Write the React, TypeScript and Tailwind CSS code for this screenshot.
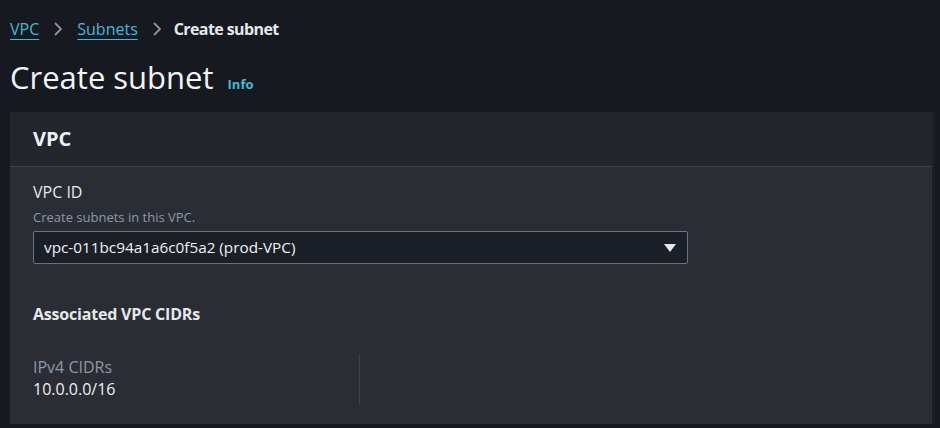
import React from "react";

export default function App() {
  return (
    <div
      className="w-[940px] h-[428px] bg-[#16191f] overflow-hidden"
      style={{ fontFamily: '"Open Sans", "Noto Sans", Arial, sans-serif' }}
    >
      <div className="pl-[10px] pt-[16px] flex items-center h-[24px] text-[16px] mt-[9px]">
        <span className="text-[#44b9d6] underline underline-offset-[4px] decoration-1">VPC</span>
        <svg width="12" height="16" viewBox="0 0 12 16" className="mx-[13px]">
          <path d="M3 2 L9 8 L3 14" fill="none" stroke="#8d9399" strokeWidth="1.8" />
        </svg>
        <span className="text-[#44b9d6] underline underline-offset-[4px] decoration-1">Subnets</span>
        <svg width="12" height="16" viewBox="0 0 12 16" className="mx-[13px] mr-[11px]">
          <path d="M3 2 L9 8 L3 14" fill="none" stroke="#8d9399" strokeWidth="1.8" />
        </svg>
        <span className="text-[#e6e8ea] font-bold tracking-[-0.6px]">Create subnet</span>
      </div>
      <div className="pl-[10px] mt-[22px] flex items-baseline h-[44px]">
        <span className="text-[31px] text-[#f2f3f3] leading-[44px]">Create subnet</span>
        <span className="ml-[14px] text-[13px] font-bold text-[#44b9d6]">Info</span>
      </div>
      <div className="ml-[10px] mt-[13px] w-[925px] h-[312px] bg-[#2a2d33] border-r-[3px] border-[#1e2025] flex flex-col">
        <div className="h-[55px] bg-[#23262d] border-b border-[#3c4048] flex items-center pl-[23px]">
          <span className="text-[20px] font-bold text-[#eef0f1]">VPC</span>
        </div>
        <div className="pl-[23px] pt-[14px]">
          <div className="text-[16px] text-[#e6e8ea] leading-[22px]">VPC ID</div>
          <div className="text-[13px] text-[#8d99a8] leading-[18px] mt-[5px]">Create subnets in this VPC.</div>
          <div className="mt-[5px] w-[655px] h-[33px] bg-[#1a1f28] border border-[#6b737c] rounded-[2px] flex items-center justify-between pl-[10px] pr-[10px]">
            <span className="text-[15.3px] text-[#f0f1f2]">vpc-011bc94a1a6c0f5a2 (prod-VPC)</span>
            <svg width="14" height="10" viewBox="0 0 14 10">
              <path d="M1 1 L13 1 L7 9 Z" fill="#e6e8ea" />
            </svg>
          </div>
          <div className="mt-[39px] text-[16px] font-bold text-[#e6e8ea] leading-[22px] tracking-[-0.2px]">Associated VPC CIDRs</div>
          <div className="mt-[29px] flex">
            <div className="w-[327px] border-r border-[#3c4048] h-[51px] pt-[2px]">
              <div className="text-[16px] text-[#8d99a8] leading-[22px]">IPv4 CIDRs</div>
              <div className="text-[16px] text-[#eef0f1] leading-[22px]">10.0.0.0/16</div>
            </div>
          </div>
        </div>
      </div>
    </div>
  );
}
